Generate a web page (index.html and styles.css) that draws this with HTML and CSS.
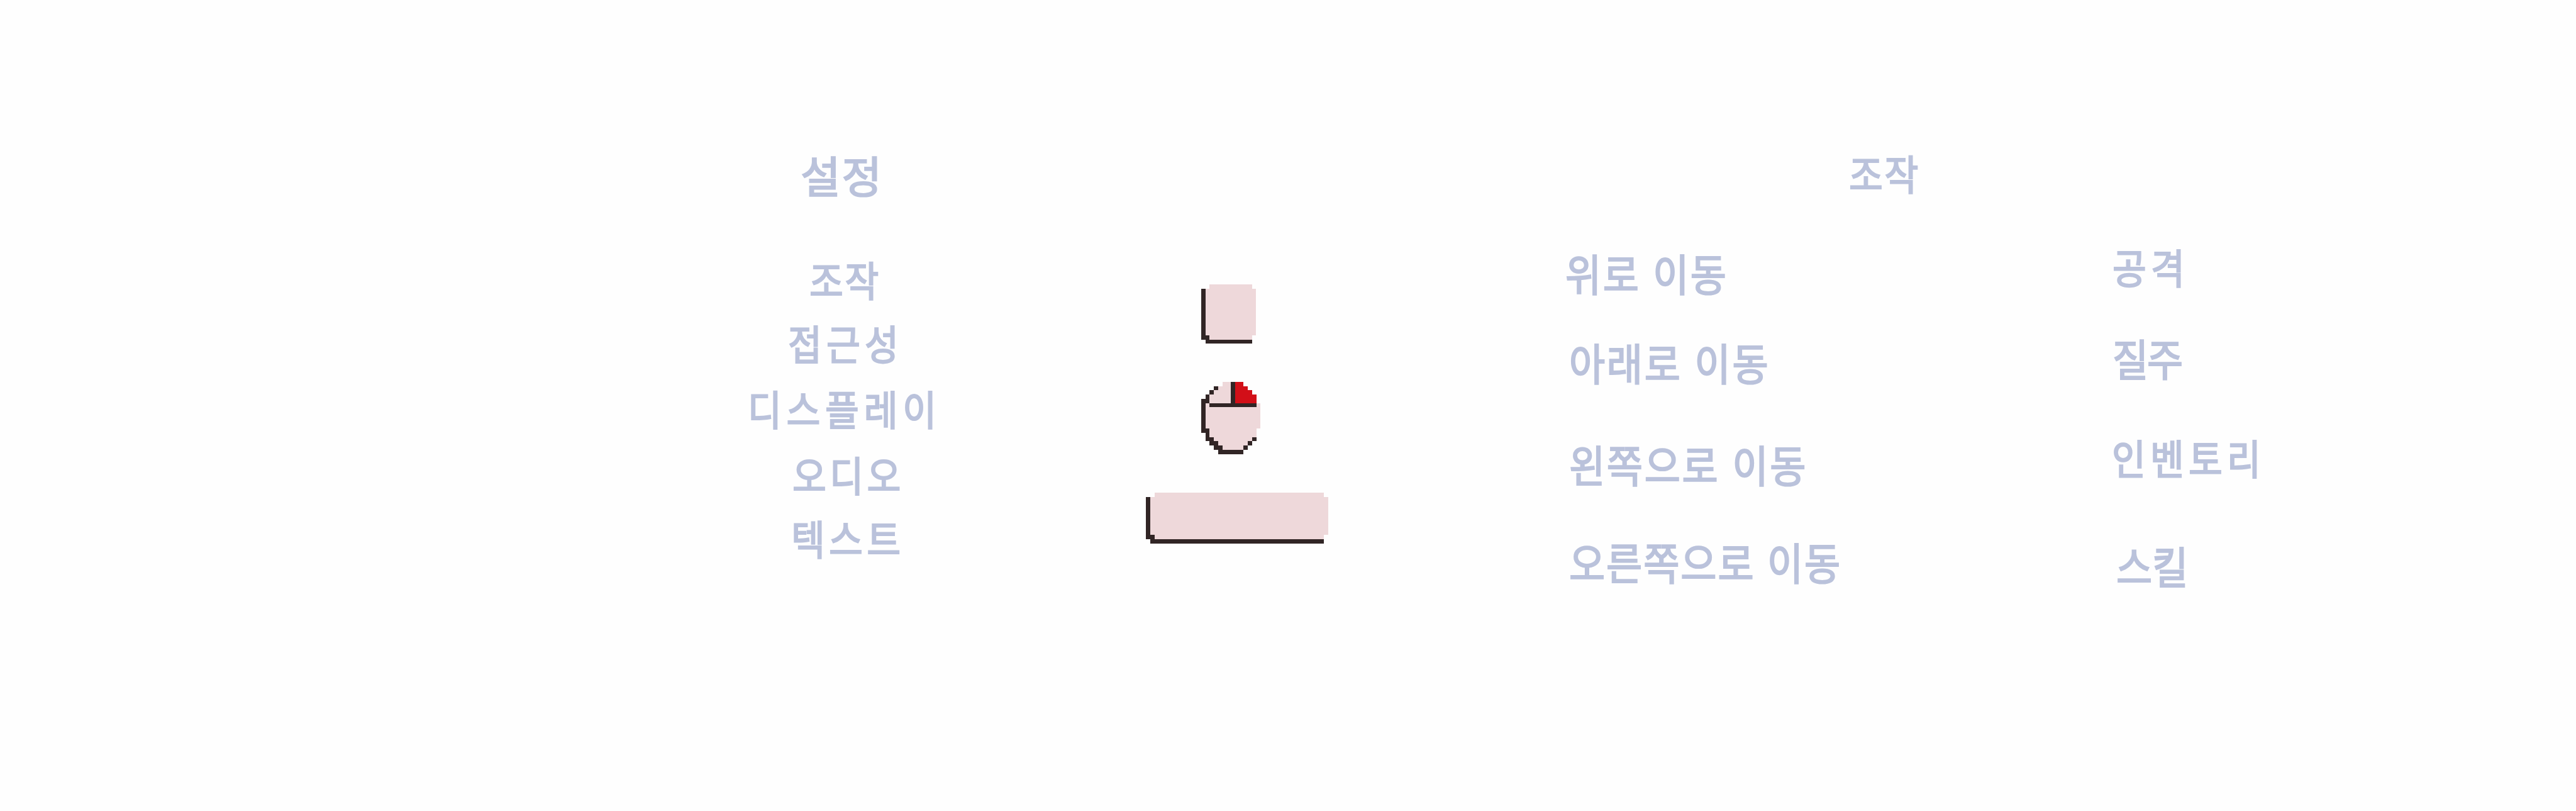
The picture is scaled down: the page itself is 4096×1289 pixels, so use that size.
FILE: index.html
```html
<!DOCTYPE html>
<html lang="ko">
<head>
<meta charset="utf-8">
<title>설정</title>
<link rel="stylesheet" href="styles.css">
</head>
<body>
<main class="screen">
  <nav class="menu">
    <h1 class="label tall menu-title">설정</h1>
    <a class="label menu-controls">조작</a>
    <a class="label menu-access">접근성</a>
    <a class="label menu-display">디스플레이</a>
    <a class="label menu-audio">오디오</a>
    <a class="label menu-text">텍스트</a>
  </nav>
  <section class="keys">
    <svg class="key" viewBox="0 0 13 14">
      <path class="face" d="M2 0h10v1h1v11h-1v1H2v-1H1V1h1z"/>
      <path class="edge" d="M0 1h1v11h1v1h10v1H1v-1H0z"/>
    </svg>
    <svg class="mouse" viewBox="0 0 14 17">
      <path class="face" d="M5 0h2v5h7v6h-1v2h-1v1h-1v1h-1v1H5v-1H4v-1H3v-1H2v-2H1V5h1V3h1V2h1V1h1z"/>
      <path class="press" d="M8 0h2v1h1v1h1v1h1v2H8z"/>
      <path class="edge" d="M7 0h1v5h5v1H2V5h5zM3 1h1v1H3zM2 2h1v1H2zM1 3h1v2H1v6h1v2h1v1h1v1h1v1h5v1H4v-1H3v-1H2v-1H1v-2H0V4h1zM12 13h1v1h-1zM11 14h1v1h-1zM10 15h1v1h-1z"/>
    </svg>
    <svg class="space" viewBox="0 0 43 12">
      <path class="face" d="M2 0h40v1h1v9h-1v1H2v-1H1V1h1z"/>
      <path class="edge" d="M0 1h1v9h1v1h40v1H1v-1H0z"/>
    </svg>
  </section>
  <section class="controls">
    <h2 class="label controls-title">조작</h2>
    <div class="bindings">
      <div class="moves">
        <span class="label tall move-up">위로 이동</span>
        <span class="label tall move-down">아래로 이동</span>
        <span class="label tall move-left">왼쪽으로 이동</span>
        <span class="label tall move-right">오른쪽으로 이동</span>
      </div>
      <div class="actions">
        <span class="label attack">공격</span>
        <span class="label tall dash">질주</span>
        <span class="label inventory">인벤토리</span>
        <span class="label tall skill">스킬</span>
      </div>
    </div>
  </section>
</main>
</body>
</html>
```
FILE: styles.css
```css
:root {
  --px: 6.748px;
  --ink: #bac2db;
}
body {
  margin: 0;
  background: #fefefe;
}
.screen {
  display: flex;
  box-sizing: border-box;
  width: 4096px;
  height: 1289px;
  padding-left: 1189px;
  overflow: hidden;
}

/* Condensed labels, spaced individually */
.label {
  display: block;
  width: max-content;
  margin: 0;
  font: 400 65px/68px "Noto Sans CJK KR", sans-serif;
  color: var(--ink);
  -webkit-text-stroke: 2.2px var(--ink);
  white-space: nowrap;
  transform: scaleX(.9);
  transform-origin: left;
}
.tall { font-size: 69px; }

.menu {
  width: 633px;
  padding-top: 243px;
}
.menu-title { margin-left: 84px; letter-spacing: 2px; transform: none; }
.menu-controls { margin: 98px 0 0 98px; letter-spacing: 3px; }
.menu-access { margin: 33px 0 0 64px; letter-spacing: 8px; }
.menu-display { margin: 36px 0 0 0; letter-spacing: 8.6px; }
.menu-audio { margin: 37px 0 0 71px; letter-spacing: 6px; }
.menu-text { margin: 33px 0 0 69px; letter-spacing: 7px; }

.keys {
  display: flex;
  flex-direction: column;
  gap: calc(var(--px) * 9);
  width: 666.5px;
  padding-top: calc(var(--px) * 67);
}
.keys svg {
  display: block;
  shape-rendering: crispEdges;
}
.key {
  width: calc(var(--px) * 13);
  height: calc(var(--px) * 14);
  margin-left: calc(var(--px) * 13);
}
.mouse {
  width: calc(var(--px) * 14);
  height: calc(var(--px) * 17);
  margin-left: calc(var(--px) * 13);
}
.space {
  width: calc(var(--px) * 43);
  height: calc(var(--px) * 12);
}
.face { fill: #eed8da; }
.edge { fill: #312525; }
.press { fill: #d20f18; }

.controls { padding-top: 240px; }
.controls-title { margin-left: 451px; letter-spacing: 3px; }
.bindings { display: flex; }
.moves {
  width: 869px;
  padding-top: 91px;
}
.move-up { letter-spacing: 2.8px; }
.move-down { margin: 74px 0 0 6px; letter-spacing: 3px; }
.move-left { margin: 94px 0 0 6px; letter-spacing: 3px; }
.move-right { margin: 87px 0 0 6.5px; letter-spacing: 2.2px; }
.actions { padding-top: 81px; }
.attack { margin-left: 1.5px; letter-spacing: 8px; }
.dash { margin: 77px 0 0 1px; letter-spacing: -2.4px; }
.inventory { margin: 90px 0 0 0; letter-spacing: 8px; }
.skill { margin: 104px 0 0 7px; letter-spacing: 0; }
```
